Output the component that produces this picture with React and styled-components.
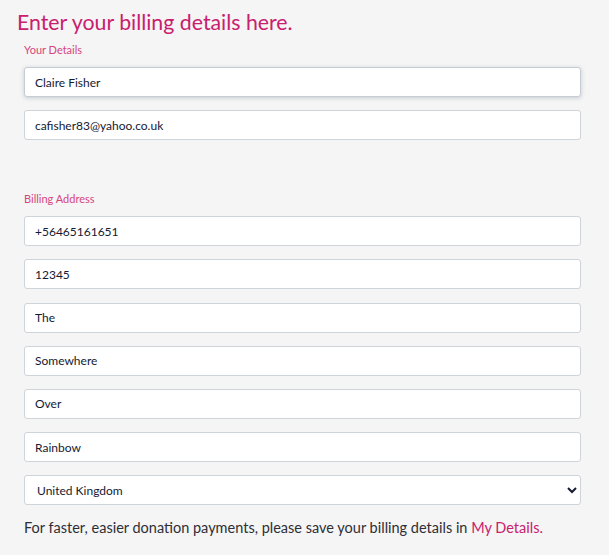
import styled, { createGlobalStyle } from "styled-components";

const GlobalStyle = createGlobalStyle`
  body {
    margin: 0;
    background-color: #f5f5f5;
    font-family: "Lato", "Open Sans", sans-serif;
  }
`;

const Page = styled.div`
  display: flex;
  flex-direction: column;
  padding: 10px 28px 0 24px;
`;

const Heading = styled.h1`
  margin: 0 0 9px -7px;
  font-size: 21.3px;
  line-height: 24px;
  font-weight: 400;
  color: #c8206e;
`;

const Section = styled.div`
  display: flex;
  flex-direction: column;
  gap: ${(p) => p.$gap || 13}px;
  margin-top: ${(p) => p.$top || 0}px;
`;

const Label = styled.div`
  font-size: 11px;
  line-height: 14px;
  color: #d6457f;
  margin-bottom: -3px;
`;

const Input = styled.input`
  box-sizing: border-box;
  width: 100%;
  height: 30px;
  padding: 0 10px;
  font-family: inherit;
  font-size: 12px;
  color: #141a33;
  background-color: white;
  border: 1px solid ${(p) => (p.$active ? "#c6ccd6" : "#cfd3da")};
  border-radius: 3px;
  box-shadow: ${(p) => (p.$active ? "0 1px 4px rgba(60, 70, 90, 0.25)" : "none")};
  outline: none;
`;

const Select = styled.select`
  box-sizing: border-box;
  width: 100%;
  height: 30px;
  padding: 0 8px;
  font-family: inherit;
  font-size: 12px;
  color: #141a33;
  background-color: white;
  border: 1px solid #cfd3da;
  border-radius: 3px;
  outline: none;
`;

const Note = styled.p`
  margin: 14px 0 0 0;
  font-size: 14.5px;
  line-height: 18px;
  color: #2d2f36;
`;

const NoteLink = styled.a`
  color: #c8206e;
  text-decoration: none;
  cursor: pointer;
`;

const address = ["+56465161651", "12345", "The", "Somewhere", "Over", "Rainbow"];

const App = () => {
  return (
    <>
      <GlobalStyle />
      <Page>
        <Heading>Enter your billing details here.</Heading>
        <Section>
          <Label>Your Details</Label>
          <Input $active defaultValue="Claire Fisher" />
          <Input defaultValue="cafisher83@yahoo.co.uk" />
        </Section>
        <Section $top={52} $gap={13.2}>
          <Label>Billing Address</Label>
          {address.map((value) => (
            <Input key={value} defaultValue={value} />
          ))}
          <Select defaultValue="United Kingdom">
            <option>United Kingdom</option>
            <option>Ireland</option>
            <option>United States</option>
          </Select>
        </Section>
        <Note>
          For faster, easier donation payments, please save your billing details in{" "}
          <NoteLink>My Details.</NoteLink>
        </Note>
      </Page>
    </>
  );
};

export default App;
